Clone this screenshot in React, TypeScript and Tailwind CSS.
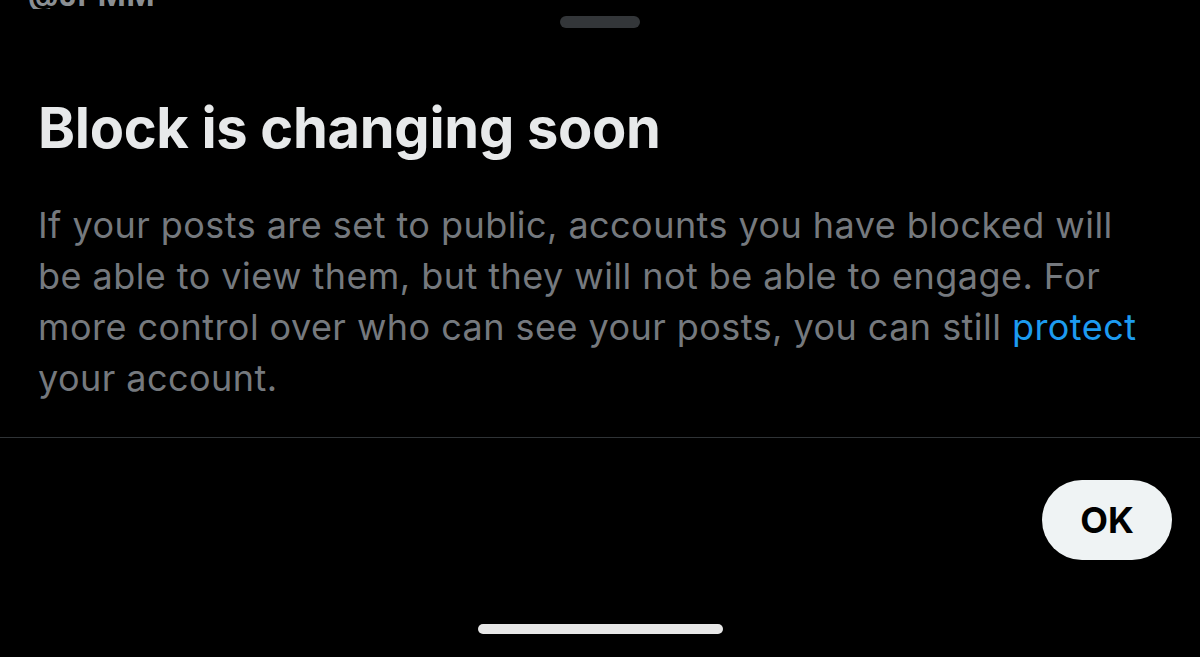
import React from 'react';

export default function App() {
  return (
    <div
      className="w-[1200px] h-[657px] bg-black flex flex-col overflow-hidden"
      style={{ fontFamily: 'Inter, "Noto Sans", sans-serif' }}
    >
      {/* clipped line from content behind the sheet */}
      <div className="h-[9px] overflow-hidden pl-[28px] flex items-end">
        <span className="text-[#8b8f93] text-[30px] font-bold leading-none -mb-[1px] tracking-wide">@JPMM</span>
      </div>

      <div className="flex justify-center pt-[7px]">
        <div className="w-[80px] h-[12px] rounded-full bg-[#333639]" />
      </div>

      <div className="px-[38px] pt-[68px]">
        <h1 className="text-[#e7e9ea] text-[56px] font-bold leading-[64px] tracking-[-0.3px]">
          Block is changing soon
        </h1>
        <p className="mt-[40px] text-[#75797e] text-[36px] leading-[51px] tracking-[0.45px] whitespace-nowrap">
          If your posts are set to public, accounts you have blocked will
          <br />
          be able to view them, but they will not be able to engage. For
          <br />
          more control over who can see your posts, you can still{' '}
          <span className="text-[#1d9bf0]">protect</span>
          <br />
          your account.
        </p>
      </div>

      <div className="mt-[33px] h-px bg-[#2f3336]" />

      <div className="flex justify-end pr-[28px] pt-[42px]">
        <button className="w-[130px] h-[80px] rounded-full bg-[#eff3f4] text-black text-[36px] font-bold">
          OK
        </button>
      </div>

      <div className="flex justify-center mt-auto mb-[23px]">
        <div className="w-[245px] h-[10px] rounded-full bg-[#e7e7e7]" />
      </div>
    </div>
  );
}
